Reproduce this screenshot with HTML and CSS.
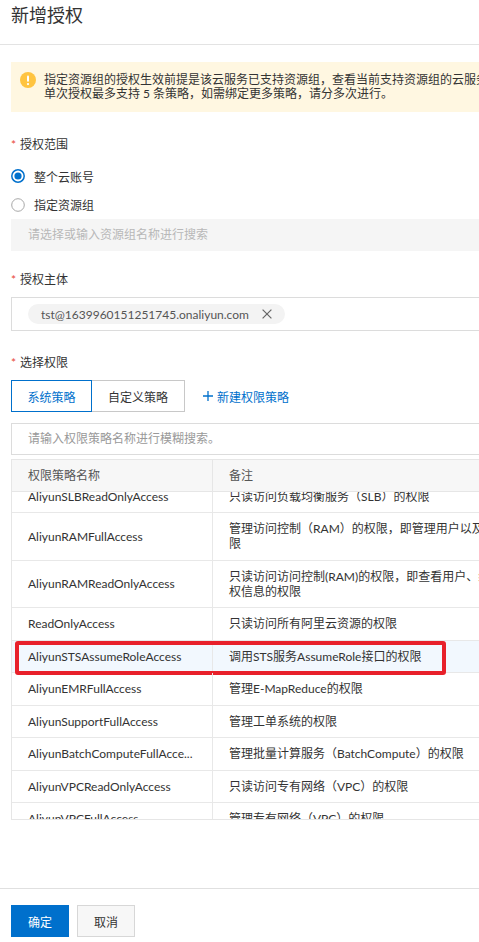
FILE: index.html
```html
<!DOCTYPE html>
<html lang="zh-CN">
<head>
<meta charset="utf-8">
<title>新增授权</title>
<link rel="stylesheet" href="styles.css">
</head>
<body>
<div class="page">
  <header class="title-bar">
    <h1 class="title">新增授权</h1>
  </header>

  <main class="content">
    <div class="alert">
      <svg class="alert-icon" viewBox="0 0 16 16" aria-hidden="true">
        <circle cx="8" cy="8" r="8" fill="#ffc440"/>
        <rect x="7" y="3.4" width="2" height="6.4" rx="1" fill="#fff"/>
        <circle cx="8" cy="12.1" r="1.15" fill="#fff"/>
      </svg>
      <div class="alert-text">
        <div>指定资源组的授权生效前提是该云服务已支持资源组，查看当前支持资源组的云服务</div>
        <div>单次授权最多支持 5 条策略，如需绑定更多策略，请分多次进行。</div>
      </div>
    </div>

    <section class="field">
      <div class="field-label"><span class="req">*</span><span>授权范围</span></div>
      <div class="radio-group">
        <label class="radio">
          <svg class="radio-mark" viewBox="0 0 14 14" aria-hidden="true">
            <circle cx="7" cy="7" r="6.2" fill="#fff" stroke="#0070cc" stroke-width="1.5"/>
            <circle cx="7" cy="7" r="3.6" fill="#0070cc"/>
          </svg>
          <span>整个云账号</span>
        </label>
        <label class="radio">
          <svg class="radio-mark" viewBox="0 0 14 14" aria-hidden="true">
            <circle cx="7" cy="7" r="6.3" fill="#fff" stroke="#a8a8a8" stroke-width="1"/>
          </svg>
          <span>指定资源组</span>
        </label>
      </div>
      <div class="select-disabled">请选择或输入资源组名称进行搜索</div>
    </section>

    <section class="field field-principal">
      <div class="field-label"><span class="req">*</span><span>授权主体</span></div>
      <div class="tag-input">
        <span class="tag">
          <span class="tag-text">tst@1639960151251745.onaliyun.com</span>
          <svg class="tag-close" viewBox="0 0 10 10" aria-hidden="true">
            <path d="M0.6 0.6 L9.4 9.4 M9.4 0.6 L0.6 9.4" stroke="#666" stroke-width="1.2" fill="none"/>
          </svg>
        </span>
      </div>
    </section>

    <section class="field field-perm">
      <div class="field-label"><span class="req">*</span><span>选择权限</span></div>
      <div class="tabs">
        <button class="tab tab-active">系统策略</button>
        <button class="tab">自定义策略</button>
        <a class="link-add">
          <svg class="plus" viewBox="0 0 10 10" aria-hidden="true">
            <path d="M5 0 V10 M0 5 H10" stroke="#0070cc" stroke-width="1.3" fill="none"/>
          </svg>
          <span>新建权限策略</span>
        </a>
      </div>
      <div class="search">请输入权限策略名称进行模糊搜索。</div>

      <div class="table">
        <div class="thead">
          <div class="th th-name">权限策略名称</div>
          <div class="th">备注</div>
        </div>
        <div class="tbody">
          <div class="tbody-inner">
            <div class="row"><div class="cell cell-name">AliyunSLBReadOnlyAccess</div><div class="cell">只读访问负载均衡服务（SLB）的权限</div></div>
            <div class="row"><div class="cell cell-name">AliyunRAMFullAccess</div><div class="cell">管理访问控制（RAM）的权限，即管理用户以及授权的权<br>限</div></div>
            <div class="row"><div class="cell cell-name">AliyunRAMReadOnlyAccess</div><div class="cell">只读访问访问控制(RAM)的权限，即查看用户、组以及授<br>权信息的权限</div></div>
            <div class="row"><div class="cell cell-name">ReadOnlyAccess</div><div class="cell">只读访问所有阿里云资源的权限</div></div>
            <div class="row row-selected"><div class="cell cell-name">AliyunSTSAssumeRoleAccess</div><div class="cell">调用STS服务AssumeRole接口的权限</div><div class="mark"></div></div>
            <div class="row"><div class="cell cell-name">AliyunEMRFullAccess</div><div class="cell">管理E-MapReduce的权限</div></div>
            <div class="row"><div class="cell cell-name">AliyunSupportFullAccess</div><div class="cell">管理工单系统的权限</div></div>
            <div class="row"><div class="cell cell-name" title="AliyunBatchComputeFullAccess">AliyunBatchComputeFullAcce...</div><div class="cell">管理批量计算服务（BatchCompute）的权限</div></div>
            <div class="row"><div class="cell cell-name">AliyunVPCReadOnlyAccess</div><div class="cell">只读访问专有网络（VPC）的权限</div></div>
            <div class="row"><div class="cell cell-name">AliyunVPCFullAccess</div><div class="cell">管理专有网络（VPC）的权限</div></div>
            <div class="row"><div class="cell cell-name">AliyunOSSFullAccess</div><div class="cell">管理对象存储服务（OSS）权限</div></div>
          </div>
        </div>
      </div>
    </section>
  </main>

  <footer class="footer">
    <button class="btn btn-primary">确定</button>
    <button class="btn btn-default">取消</button>
  </footer>
</div>
</body>
</html>
```

FILE: styles.css
```css
* {
  box-sizing: border-box;
  margin: 0;
  padding: 0;
}

html,
body {
  width: 479px;
  height: 942px;
  overflow: hidden;
  background: #fff;
}

body {
  font-family: Lato, "Noto Sans CJK SC", sans-serif;
  font-size: 12px;
  color: #333;
}

.page {
  display: flex;
  flex-direction: column;
  width: 479px;
  height: 942px;
}

/* title */
.title-bar {
  flex: none;
  height: 45px;
  padding: 3px 11px 0;
  border-bottom: 1px solid #e3e3e3;
}

.title {
  font-size: 18px;
  line-height: 24px;
  font-weight: normal;
  color: #333;
}

/* main */
.content {
  flex: none;
  width: 580px;
  padding-left: 11px;
}

.alert {
  margin-top: 17px;
  height: 50px;
  display: flex;
  align-items: flex-start;
  gap: 8px;
  padding: 11px 0 0 9px;
  background: #fff7e1;
}

.alert-icon {
  flex: none;
  width: 16px;
  height: 16px;
  margin-top: -1px;
}

.alert-text {
  line-height: 14px;
  white-space: nowrap;
  color: #333;
}

.field {
  margin-top: 24px;
}

.field-principal {
  margin-top: 20px;
}

.field-perm {
  margin-top: 23px;
}

.field-label {
  display: flex;
  align-items: center;
  gap: 4px;
  height: 18px;
  line-height: 18px;
  margin-bottom: 8px;
}

.req {
  color: #e84738;
}

.radio-group {
  margin-top: 3px;
}

.radio {
  display: flex;
  align-items: center;
  gap: 9px;
  height: 28.5px;
}

.radio-mark {
  flex: none;
  width: 14px;
  height: 14px;
}

.select-disabled {
  height: 32px;
  line-height: 32px;
  padding-left: 17px;
  background: #f5f5f5;
  color: #b8b8b8;
}

.tag-input {
  height: 34px;
  display: flex;
  align-items: center;
  padding: 0 16px;
  border: 1px solid #dcdcdc;
}

.tag {
  display: inline-flex;
  align-items: center;
  gap: 13px;
  height: 20px;
  padding: 0 13px;
  border-radius: 10px;
  background: #f3f3f3;
  color: #555;
}

.tag-close {
  width: 10px;
  height: 10px;
}

.tabs {
  display: flex;
  align-items: center;
  height: 32px;
}

.tab {
  height: 32px;
  font-family: inherit;
  font-size: 12px;
  background: #fff;
  color: #333;
  border: 1px solid #c8c8c8;
  border-left: none;
  width: 93px;
}

.tab-active {
  width: 81px;
  color: #0070cc;
  border: 1px solid #0070cc;
}

.link-add {
  display: flex;
  align-items: center;
  gap: 4px;
  margin-left: 18px;
  color: #0070cc;
}

.plus {
  width: 10px;
  height: 10px;
}

.search {
  margin-top: 10.5px;
  height: 32px;
  line-height: 30px;
  padding-left: 16px;
  border: 1px solid #dcdcdc;
  color: #999;
}

/* table */
.table {
  margin-top: 4.5px;
  border: 1px solid #e6e6e6;
}

.thead {
  display: grid;
  grid-template-columns: 201px 1fr;
  height: 32px;
  background: #f7f7f7;
  border-bottom: 1px solid #e6e6e6;
}

.th {
  line-height: 31px;
  padding-left: 16px;
  color: #555;
}

.th-name {
  border-right: 1px solid #e6e6e6;
}

.tbody {
  height: 327px;
  overflow: hidden;
}

.tbody-inner {
  margin-top: -11.5px;
}

.row {
  position: relative;
  display: grid;
  grid-template-columns: 201px 1fr;
  border-bottom: 1px solid #e8e8e8;
}

.row-selected {
  background: #f2f8fe;
}

.cell {
  padding: 8.25px 16px;
  line-height: 15px;
  white-space: nowrap;
  color: #333;
}

.cell-name {
  display: flex;
  align-items: center;
  border-right: 1px solid #e8e8e8;
  overflow: hidden;
}

.mark {
  position: absolute;
  left: 3px;
  top: 0;
  width: 431px;
  height: 34.5px;
  border: 4px solid #e8202a;
  border-radius: 3px;
  pointer-events: none;
}

/* footer */
.footer {
  flex: none;
  margin-top: auto;
  display: flex;
  gap: 8px;
  height: 54px;
  padding: 16px 11px 5px;
  border-top: 1px solid #e0e0e0;
}

.btn {
  width: 58px;
  height: 32px;
  font-family: inherit;
  font-size: 12px;
  cursor: pointer;
}

.btn-primary {
  background: #0070cc;
  color: #fff;
  border: none;
}

.btn-default {
  background: #f7f7f7;
  color: #333;
  border: 1px solid #d7d7d7;
}
```
